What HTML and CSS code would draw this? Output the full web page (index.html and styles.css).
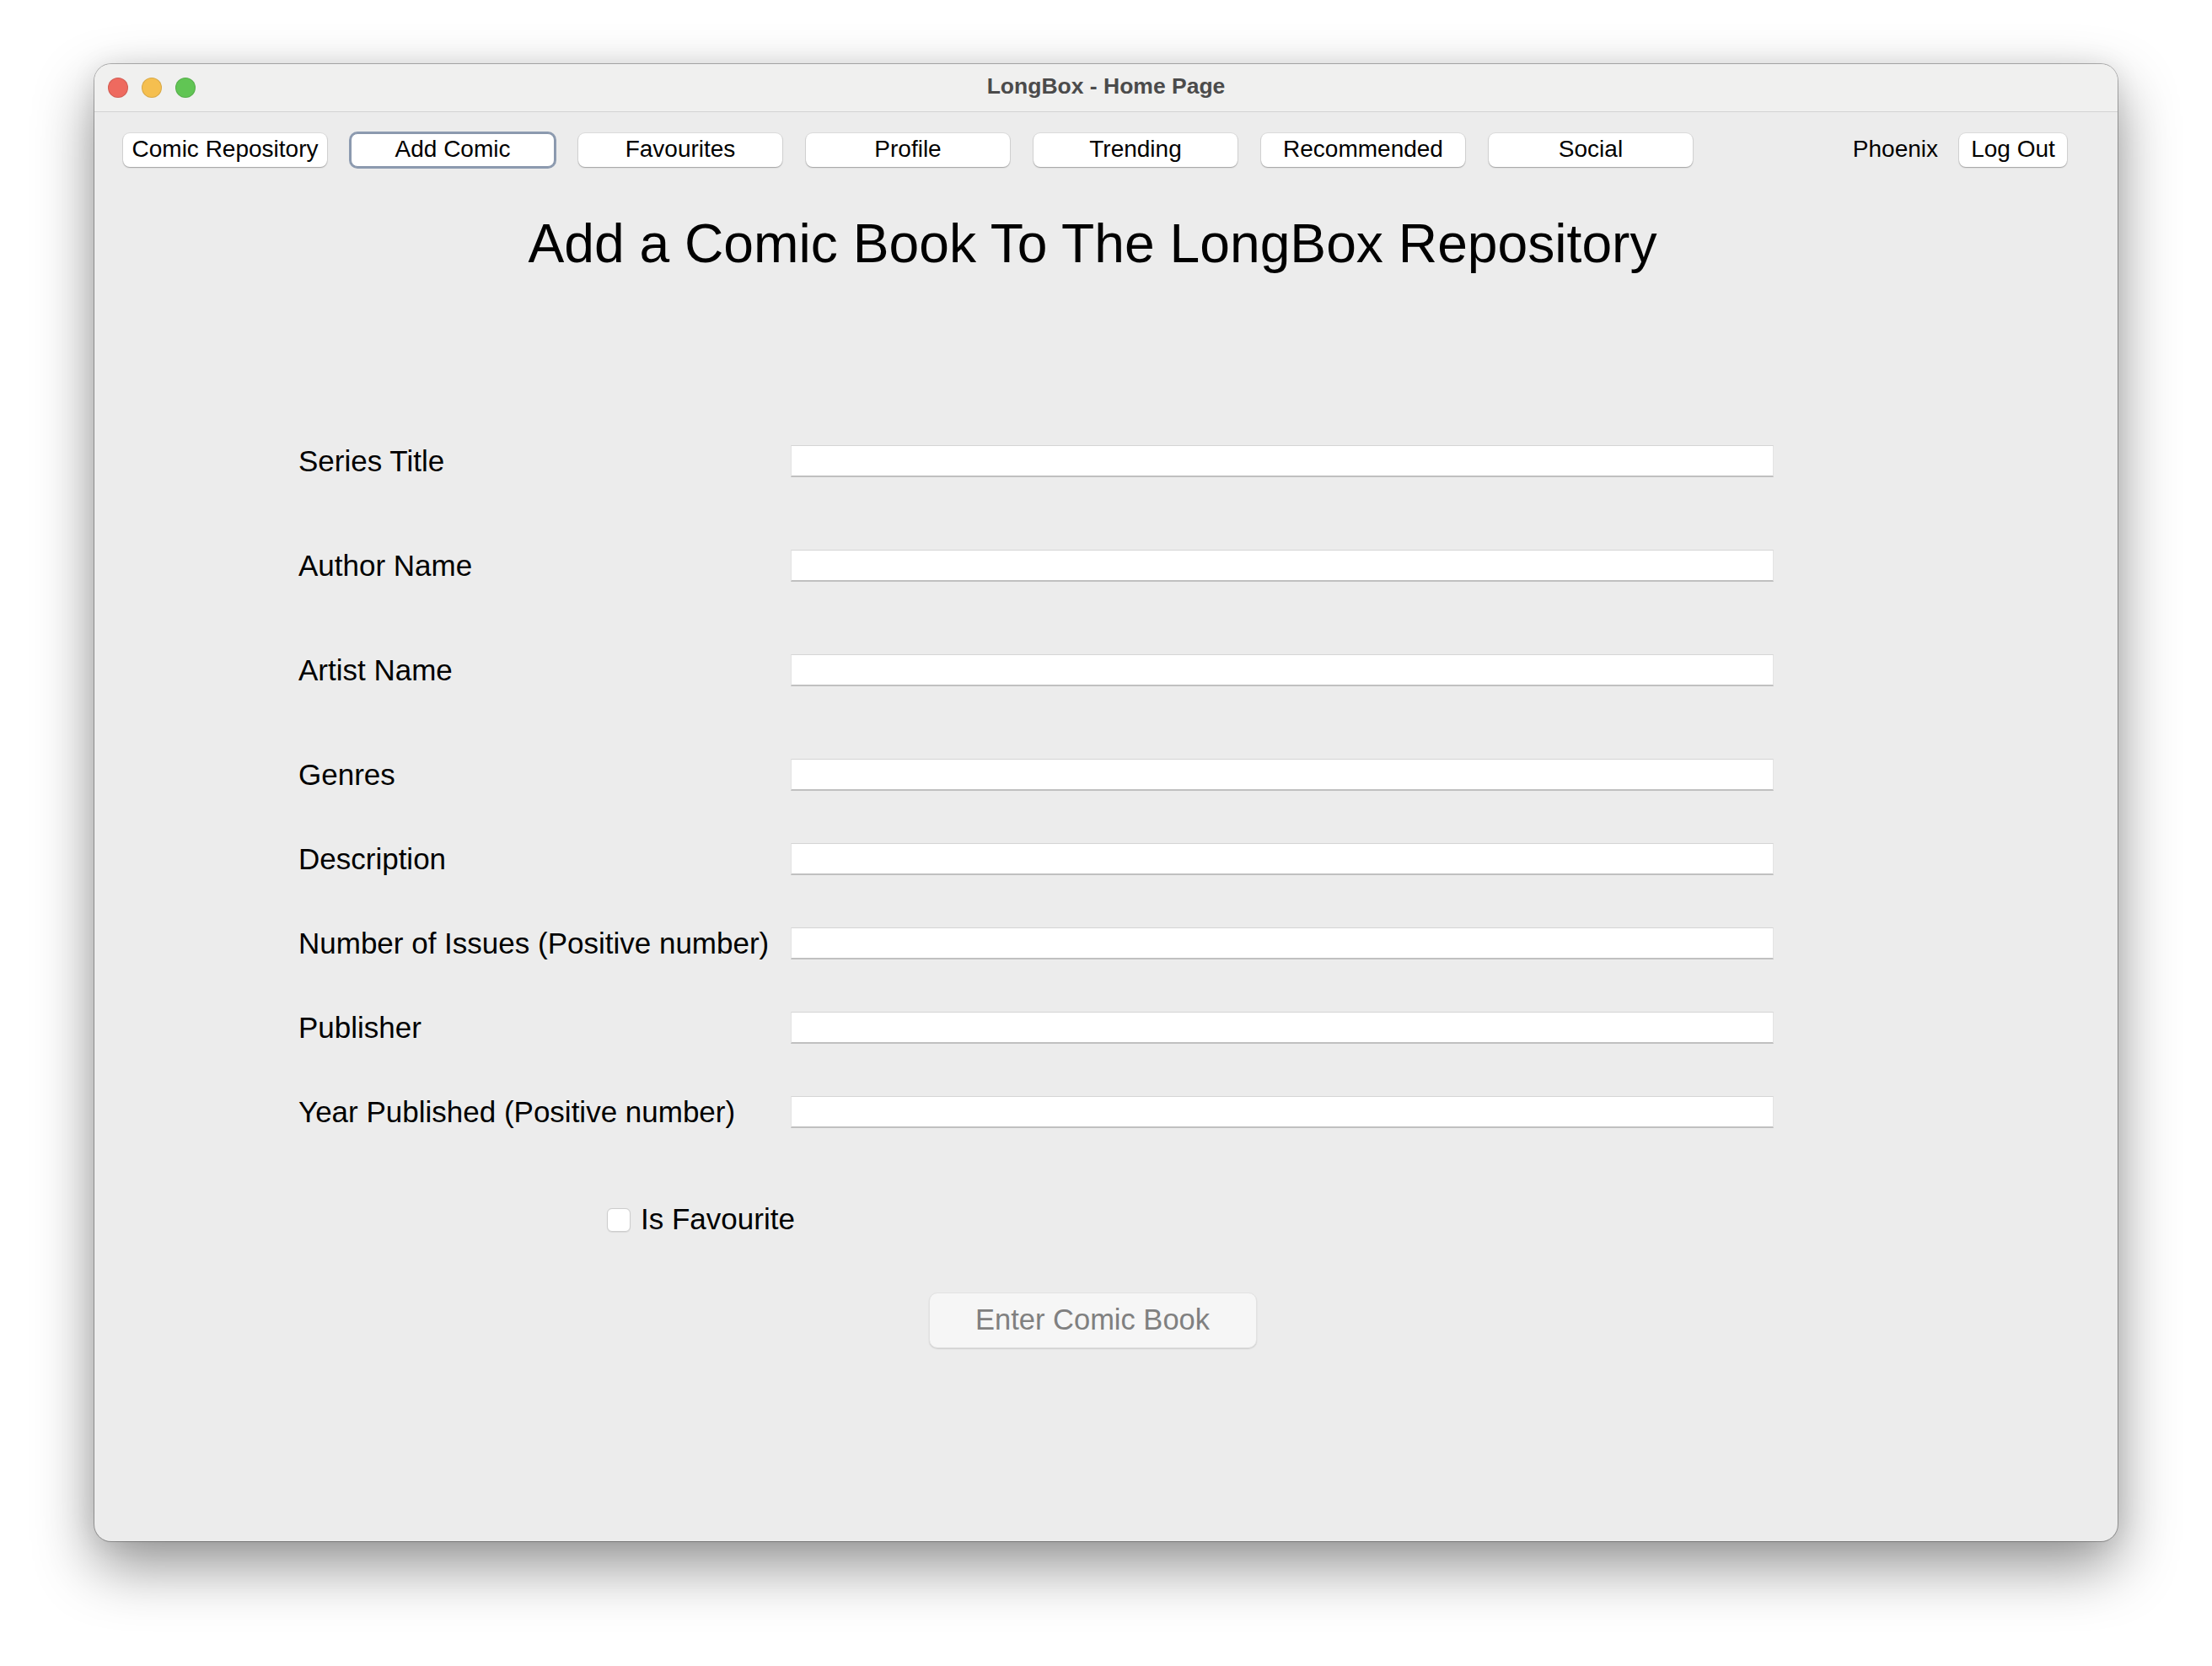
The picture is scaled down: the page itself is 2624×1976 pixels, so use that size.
FILE: index.html
```html
<!DOCTYPE html>
<html lang="en">
<head>
<meta charset="utf-8">
<title>LongBox - Home Page</title>
<link rel="stylesheet" href="styles.css">
</head>
<body>
<div class="window">
  <div class="titlebar">
    <div class="lights">
      <span class="light red"></span>
      <span class="light yellow"></span>
      <span class="light green"></span>
    </div>
    <div class="wtitle">LongBox - Home Page</div>
    <div class="spacer"></div>
  </div>
  <div class="content">
    <nav class="nav">
      <div class="tabs">
        <button class="btn">Comic Repository</button>
        <button class="btn focused">Add Comic</button>
        <button class="btn">Favourites</button>
        <button class="btn">Profile</button>
        <button class="btn">Trending</button>
        <button class="btn">Recommended</button>
        <button class="btn">Social</button>
      </div>
      <div class="user">
        <span class="uname">Phoenix</span>
        <button class="btn logout">Log Out</button>
      </div>
    </nav>

    <h1 class="heading">Add a Comic Book To The LongBox Repository</h1>

    <div class="form">
      <div class="row wide"><span class="lbl">Series Title</span><div class="field"></div></div>
      <div class="row wide"><span class="lbl">Author Name</span><div class="field"></div></div>
      <div class="row wide"><span class="lbl">Artist Name</span><div class="field"></div></div>
      <div class="row"><span class="lbl">Genres</span><div class="field"></div></div>
      <div class="row"><span class="lbl">Description</span><div class="field"></div></div>
      <div class="row"><span class="lbl">Number of Issues (Positive number)</span><div class="field"></div></div>
      <div class="row"><span class="lbl">Publisher</span><div class="field"></div></div>
      <div class="row last"><span class="lbl">Year Published (Positive number)</span><div class="field"></div></div>

      <div class="check-row">
        <span class="checkbox"></span>
        <span class="check-label">Is Favourite</span>
      </div>
    </div>

    <div class="submit-wrap">
      <button class="submit">Enter Comic Book</button>
    </div>
  </div>
</div>
</body>
</html>
```

FILE: styles.css
```css
html, body {
  margin: 0;
  padding: 0;
}

body {
  width: 2624px;
  height: 1976px;
  overflow: hidden;
  background: #ffffff;
  font-family: "Liberation Sans", Arial, sans-serif;
  color: #000;
}

.window {
  box-sizing: border-box;
  width: 2400px;
  height: 1752px;
  margin: 76px 0 0 112px;
  border-radius: 20px;
  overflow: hidden;
  background: #ececec;
  display: flex;
  flex-direction: column;
  box-shadow:
    0 0 0 1px rgba(0, 0, 0, 0.28),
    0 30px 70px 0 rgba(0, 0, 0, 0.42),
    0 0 30px rgba(0, 0, 0, 0.08);
}

/* ---------- title bar ---------- */
.titlebar {
  height: 56px;
  flex: none;
  display: grid;
  grid-template-columns: 1fr auto 1fr;
  align-items: center;
  background: #f0f0ef;
  border-bottom: 1px solid #d3d3d3;
}

.lights {
  display: flex;
  gap: 16px;
  padding-left: 16px;
}

.light {
  width: 24px;
  height: 24px;
  border-radius: 50%;
  box-shadow: inset 0 0 0 1px rgba(0, 0, 0, 0.12);
}

.red { background: #ee6a5f; }
.yellow { background: #f5bf4f; }
.green { background: #61c554; }

.wtitle {
  font-weight: bold;
  font-size: 26.5px;
  line-height: 53px;
  padding-bottom: 3px;
  color: #4b4b4b;
  white-space: nowrap;
}

/* ---------- content ---------- */
.content {
  flex: 1;
  display: flex;
  flex-direction: column;
}

.nav {
  display: flex;
  align-items: center;
  padding: 25px 60px 0 34px;
}

.tabs {
  display: flex;
  gap: 28px;
}

.btn {
  box-sizing: border-box;
  width: 242px;
  height: 40px;
  padding: 0 0 2px 0;
  border: none;
  border-radius: 8px;
  background: #ffffff;
  font-family: "Liberation Sans", Arial, sans-serif;
  font-size: 28px;
  line-height: 38px;
  color: #000;
  box-shadow:
    0 0 0 1px rgba(0, 0, 0, 0.07),
    0 1px 1.5px rgba(0, 0, 0, 0.28);
}

.btn.focused {
  border: 1px solid #8896ab;
  line-height: 36px;
  box-shadow: 0 0 0 2px #8d9bb0;
}

.user {
  margin-left: auto;
  display: flex;
  align-items: center;
  gap: 25px;
}

.uname {
  font-size: 28px;
  line-height: 38px;
  padding-bottom: 2px;
}

.btn.logout {
  width: 128px;
}

.heading {
  margin: 54px 0 0 0;
  padding-right: 32px;
  font-weight: normal;
  font-size: 64.2px;
  line-height: 74px;
  text-align: center;
  white-space: nowrap;
}

/* ---------- form ---------- */
.form {
  margin: 202px 0 0 242px;
  display: flex;
  flex-direction: column;
}

.row {
  display: flex;
  align-items: flex-start;
  height: 38px;
  margin-bottom: 62px;
}

.row.wide {
  margin-bottom: 86px;
}

.row.last {
  margin-bottom: 0;
}

.lbl {
  width: 584px;
  flex: none;
  font-size: 35px;
  line-height: 37px;
  white-space: nowrap;
}

.field {
  box-sizing: border-box;
  width: 1166px;
  height: 38px;
  background: #ffffff;
  border-top: 1px solid #d5d5d5;
  border-left: 1px solid #e3e3e3;
  border-right: 1px solid #e3e3e3;
  border-bottom: 2px solid #c0c0c0;
}

.check-row {
  display: flex;
  align-items: center;
  gap: 12px;
  height: 40px;
  margin: 89px 0 0 366px;
}

.checkbox {
  box-sizing: border-box;
  width: 28px;
  height: 28px;
  border-radius: 6px;
  background: #ffffff;
  border: 1px solid #cdcdcd;
  box-shadow: 0 0.5px 1px rgba(0, 0, 0, 0.08);
}

.check-label {
  font-size: 35px;
  line-height: 38px;
  padding-bottom: 2px;
}

.submit-wrap {
  display: flex;
  justify-content: center;
  padding-right: 32px;
  margin-top: 66px;
}

.submit {
  box-sizing: border-box;
  width: 389px;
  height: 66px;
  padding: 0 0 2px 0;
  border: 1px solid #e2e2e2;
  border-radius: 10px;
  background: #f6f6f6;
  font-family: "Liberation Sans", Arial, sans-serif;
  font-size: 34.5px;
  color: #808080;
  box-shadow: 0 1px 1.5px rgba(0, 0, 0, 0.14);
}
```
